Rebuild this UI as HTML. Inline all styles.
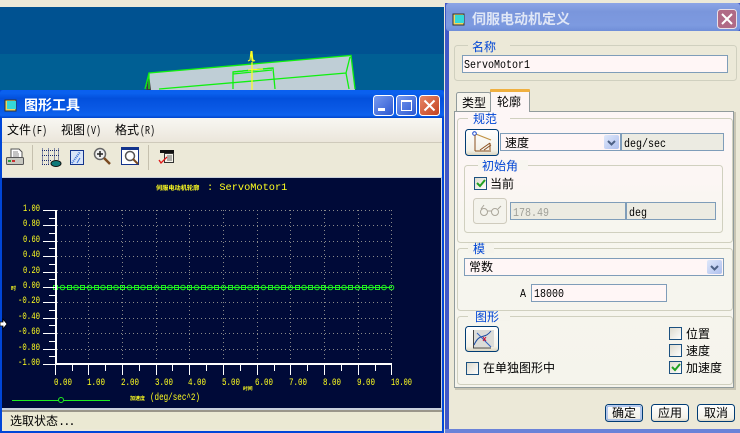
<!DOCTYPE html>
<html><head><meta charset="utf-8"><style>
html,body{margin:0;padding:0;background:#ece9d8;overflow:hidden}
svg{display:block}
text{font-family:"Liberation Sans","WenQuanYi Zen Hei","Noto Sans CJK SC",sans-serif;font-size:12px;fill:#000}
.m{font-family:"Liberation Mono","WenQuanYi Zen Hei",monospace;font-size:11.5px}
.b{fill:#0046d5}
.y{font-family:"Liberation Mono",monospace;font-size:10px;fill:#ffff20}
.c{shape-rendering:crispEdges}
</style></head><body>
<svg width="740" height="433" viewBox="0 0 740 433" xmlns="http://www.w3.org/2000/svg">
<defs>
<linearGradient id="tb" x1="0" y1="0" x2="0" y2="1"><stop offset="0" stop-color="#0a5ff0"/><stop offset=".12" stop-color="#0a60ee"/><stop offset=".3" stop-color="#0350dc"/><stop offset=".7" stop-color="#0a5ae6"/><stop offset=".9" stop-color="#0d62ee"/><stop offset="1" stop-color="#0044cc"/></linearGradient>
<linearGradient id="tb2" x1="0" y1="0" x2="0" y2="1"><stop offset="0" stop-color="#8ca5e6"/><stop offset=".3" stop-color="#7a96dc"/><stop offset=".8" stop-color="#7d9ae0"/><stop offset="1" stop-color="#6f8ed8"/></linearGradient>
<linearGradient id="btn" x1="0" y1="0" x2="0" y2="1"><stop offset="0" stop-color="#fff"/><stop offset=".8" stop-color="#f3f1e8"/><stop offset="1" stop-color="#d8d2bd"/></linearGradient>
<linearGradient id="bl" x1="0" y1="0" x2="1" y2="1"><stop offset="0" stop-color="#7a9cf0"/><stop offset="1" stop-color="#2a56d0"/></linearGradient>
<linearGradient id="rd" x1="0" y1="0" x2="1" y2="1"><stop offset="0" stop-color="#e8886a"/><stop offset="1" stop-color="#c2401c"/></linearGradient>
<linearGradient id="cb" x1="0" y1="0" x2="1" y2="1"><stop offset="0" stop-color="#dcd9cc"/><stop offset="1" stop-color="#fff"/></linearGradient>
<linearGradient id="dd" x1="0" y1="0" x2="1" y2="1"><stop offset="0" stop-color="#dfe8fa"/><stop offset="1" stop-color="#aebfee"/></linearGradient>
<linearGradient id="mn" x1="0" y1="0" x2="0" y2="1"><stop offset="0" stop-color="#f8f7f2"/><stop offset="1" stop-color="#ebe6db"/></linearGradient>
<linearGradient id="pn" x1="0" y1="0" x2="0" y2="1"><stop offset="0" stop-color="#fdf6f6"/><stop offset=".25" stop-color="#fcf6f4"/><stop offset=".4" stop-color="#f7f6ef"/><stop offset="1" stop-color="#f5f4ec"/></linearGradient>
</defs>

<!-- background -->
<rect class="c" width="740" height="7" fill="#ece9d8"/>
<rect class="c" y="7" width="447" height="47" fill="#005291"/>
<rect class="c" y="54" width="447" height="37" fill="#005f94"/>

<!-- model -->
<polygon points="149,73 351,55.5 355,90 146,90" fill="#bfced6"/>
<polygon points="146,90 149,74 151,90" fill="#3c3c3c"/>
<g fill="none" stroke="#10f010" stroke-width="1.300">
<path d="M145,89 149,73 351,55.5 355,89"/>
<path d="M149,73V89"/>
<path d="M159,89 346,73 350,57"/>
<path d="M346,73 349,89"/>
<path d="M233,89V72L273,68 275,89"/>
<path d="M233,72 272,68M233,74 272,70"/>
</g>
<path d="M252,62V90" stroke="#ffff20" stroke-width="1.200"/>
<path d="M248,61 250,60 251,51 253,60 255,61M251,51 252,61M252,51 253,62M248,70 263,69" stroke="#ffff20" stroke-width="1" fill="none"/>

<!-- graph window -->
<rect class="c" y="90" width="444" height="343" fill="#0046d8"/>
<rect x="0" y="90" width="444" height="28" rx="3" fill="url(#tb)"/>
<rect class="c" x="2" y="118" width="440" height="313" fill="#ece9d8"/>
<rect class="c" x="2" y="118" width="440" height="24" fill="url(#mn)"/>
<rect class="c" x="2" y="142" width="440" height="1" fill="#cfcabb"/>

<!-- title icon -->
<rect class="c" x="5" y="100" width="11" height="11" fill="#f0d860" stroke="#333"/>
<rect class="c" x="7" y="101" width="9" height="8" fill="#35d8d8"/>
<text x="24" y="110" style="font-size:14px;font-weight:bold;fill:#fff">图形工具</text>

<!-- caption buttons -->
<rect x="373.500" y="95.500" width="20" height="20" rx="3" fill="url(#bl)" stroke="#fff"/>
<rect class="c" x="378" y="108" width="7" height="3" fill="#fff"/>
<rect x="396.500" y="95.500" width="20" height="20" rx="3" fill="url(#bl)" stroke="#fff"/>
<path class="c" d="M401.500,101.500h10v9h-10z" fill="none" stroke="#fff"/><rect class="c" x="401" y="100" width="11" height="2" fill="#fff"/>
<rect x="419.500" y="95.500" width="20" height="20" rx="3" fill="url(#rd)" stroke="#fff"/>
<path d="M424.500,100.500 434.500,110.500M434.500,100.500 424.500,110.500" stroke="#fff" stroke-width="2"/>

<!-- menu -->
<text x="7" y="134">文件</text><text x="32" y="134" class="m" textLength="15" lengthAdjust="spacingAndGlyphs">(F)</text>
<text x="61" y="134">视图</text><text x="86" y="134" class="m" textLength="15" lengthAdjust="spacingAndGlyphs">(V)</text>
<text x="115" y="134">格式</text><text x="140" y="134" class="m" textLength="15" lengthAdjust="spacingAndGlyphs">(R)</text>

<!-- toolbar -->
<rect class="c" x="32" y="145" width="1" height="25" fill="#c5c0ae"/>
<rect class="c" x="148" y="145" width="1" height="25" fill="#c5c0ae"/>
<!-- printer -->
<path d="M11,149h8l3,3v6H11z" fill="#fff" stroke="#555"/>
<path d="M13,152h5M13,154h6M13,156h6" stroke="#888"/>
<rect x="6.500" y="157.500" width="17" height="7" rx="1" fill="#c8c8c0" stroke="#555"/>
<rect class="c" x="8" y="160" width="3" height="2" fill="#2a9a3a"/><rect class="c" x="12" y="160" width="3" height="2" fill="#c83030"/>
<!-- grid-eye -->
<path d="M42.500,148.500V165M48.500,148.500V165M54.500,148.500V160M58.500,148.500V160M42,150.500H59M42,155.500H59M42,160.500H52M42,164.500H50" stroke="#1a2a70" stroke-dasharray="1 1" fill="none"/>
<ellipse cx="56" cy="163.500" rx="5" ry="3" fill="#0e7a7a" stroke="#111"/>
<!-- sheet icon -->
<rect class="c" x="70.500" y="150.500" width="13" height="14" fill="#d8e4f8" stroke="#12338c"/>
<path d="M72,163 80,152" stroke="#3a70d8" stroke-width="2" stroke-dasharray="1 1"/>
<path d="M77,163 80,158" stroke="#3a70d8"/>
<!-- zoom plus -->
<circle cx="100" cy="154" r="5.500" fill="#f0f0f0" stroke="#666" stroke-width="1.500"/>
<path d="M97,154h6M100,151v6" stroke="#222" stroke-width="1.500"/>
<path d="M104,158 110,164" stroke="#7a4a20" stroke-width="2.500"/>
<!-- zoom window -->
<rect class="c" x="121.500" y="147.500" width="17" height="17" fill="#fff" stroke="#12338c"/>
<rect class="c" x="121" y="147" width="18" height="3" fill="#12338c"/>
<circle cx="130" cy="156" r="4.500" fill="none" stroke="#555" stroke-width="1.500"/>
<path d="M133,159 138,164" stroke="#7a4a20" stroke-width="2"/>
<!-- check doc -->
<rect class="c" x="160" y="150" width="14" height="3" fill="#111"/>
<rect class="c" x="164.500" y="153.500" width="9" height="9" fill="#f4f2e8" stroke="#333"/>
<path d="M167,156h5M167,158h5M167,160h5" stroke="#666"/>
<path d="M159,160 161,163 167,157" stroke="#e01818" stroke-width="1.300" fill="none"/>

<!-- plot area -->
<rect class="c" x="2" y="177" width="440" height="233" fill="#c8d0dc"/>
<rect class="c" x="2" y="178" width="439" height="230" fill="#000a38"/>
<g stroke="#8a8a8a" stroke-dasharray="1 3" fill="none">
<path class="c" d="M57,210.500H391M57,225.500H391M57,241.500H391M57,256.500H391M57,272.500H391M57,302.500H391M57,318.500H391M57,333.500H391M57,349.500H391"/>
<path class="c" d="M88.500,210V362M122.500,210V362M156.500,210V362M189.500,210V362M223.500,210V362M257.500,210V362M290.500,210V362M324.500,210V362M358.500,210V362M391.500,210V362"/>
</g>
<path class="c" d="M54,287.500H392" stroke="#20ee20"/>
<path class="c" fill="none" stroke="#20ee20" d="M53.500,285.500h4v4h-4zM67.500,285.500h4v4h-4zM80.500,285.500h4v4h-4zM94.500,285.500h4v4h-4zM107.500,285.500h4v4h-4zM120.500,285.500h4v4h-4zM134.500,285.500h4v4h-4zM147.500,285.500h4v4h-4zM161.500,285.500h4v4h-4zM174.500,285.500h4v4h-4zM187.500,285.500h4v4h-4zM201.500,285.500h4v4h-4zM214.500,285.500h4v4h-4zM228.500,285.500h4v4h-4zM241.500,285.500h4v4h-4zM254.500,285.500h4v4h-4zM268.500,285.500h4v4h-4zM281.500,285.500h4v4h-4zM295.500,285.500h4v4h-4zM308.500,285.500h4v4h-4zM321.500,285.500h4v4h-4zM335.500,285.500h4v4h-4zM348.500,285.500h4v4h-4zM362.500,285.500h4v4h-4zM375.500,285.500h4v4h-4z"/>
<g fill="none" stroke="#20ee20">
<circle cx="62.500" cy="287.500" r="2.300"/><circle cx="76" cy="287.500" r="2.300"/><circle cx="89.500" cy="287.500" r="2.300"/><circle cx="103" cy="287.500" r="2.300"/><circle cx="116" cy="287.500" r="2.300"/><circle cx="129.500" cy="287.500" r="2.300"/><circle cx="143" cy="287.500" r="2.300"/><circle cx="156.500" cy="287.500" r="2.300"/><circle cx="170" cy="287.500" r="2.300"/><circle cx="183" cy="287.500" r="2.300"/><circle cx="196.500" cy="287.500" r="2.300"/><circle cx="210" cy="287.500" r="2.300"/><circle cx="223.500" cy="287.500" r="2.300"/><circle cx="237" cy="287.500" r="2.300"/><circle cx="250" cy="287.500" r="2.300"/><circle cx="263.500" cy="287.500" r="2.300"/><circle cx="277" cy="287.500" r="2.300"/><circle cx="290.500" cy="287.500" r="2.300"/><circle cx="304" cy="287.500" r="2.300"/><circle cx="317" cy="287.500" r="2.300"/><circle cx="330.500" cy="287.500" r="2.300"/><circle cx="344" cy="287.500" r="2.300"/><circle cx="357.500" cy="287.500" r="2.300"/><circle cx="371" cy="287.500" r="2.300"/><circle cx="384" cy="287.500" r="2.300"/><circle cx="391.500" cy="287.500" r="2.300"/>
</g>
<rect class="c" x="55" y="210" width="2" height="155" fill="#fff"/>
<rect class="c" x="55" y="363" width="337" height="2" fill="#fff"/>
<path class="c" stroke="#fff" fill="none" d="M43,210.500H55M43,225.500H55M43,241.500H55M43,256.500H55M43,272.500H55M43,287.500H55M43,302.500H55M43,318.500H55M43,333.500H55M43,349.500H55M43,364.500H55
M49,218.500H55M49,233.500H55M49,248.500H55M49,264.500H55M49,279.500H55M49,295.500H55M49,310.500H55M49,325.500H55M49,341.500H55M49,356.500H55
M55.500,365V375M88.500,365V375M122.500,365V375M156.500,365V375M189.500,365V375M223.500,365V375M257.500,365V375M290.500,365V375M324.500,365V375M358.500,365V375M391.500,365V375
M72.500,365V371M105.500,365V371M139.500,365V371M172.500,365V371M206.500,365V371M240.500,365V371M274.500,365V371M307.500,365V371M341.500,365V371M375.500,365V371"/>
<text class="y" x="23" y="211" textLength="17" lengthAdjust="spacingAndGlyphs">1.00</text>
<text class="y" x="23" y="226" textLength="17" lengthAdjust="spacingAndGlyphs">0.80</text>
<text class="y" x="23" y="242" textLength="17" lengthAdjust="spacingAndGlyphs">0.60</text>
<text class="y" x="23" y="257" textLength="17" lengthAdjust="spacingAndGlyphs">0.40</text>
<text class="y" x="23" y="273" textLength="17" lengthAdjust="spacingAndGlyphs">0.20</text>
<text class="y" x="23" y="288" textLength="17" lengthAdjust="spacingAndGlyphs">0.00</text>
<text class="y" x="18" y="303" textLength="22" lengthAdjust="spacingAndGlyphs">-0.20</text>
<text class="y" x="18" y="319" textLength="22" lengthAdjust="spacingAndGlyphs">-0.40</text>
<text class="y" x="18" y="334" textLength="22" lengthAdjust="spacingAndGlyphs">-0.60</text>
<text class="y" x="18" y="350" textLength="22" lengthAdjust="spacingAndGlyphs">-0.80</text>
<text class="y" x="18" y="365" textLength="22" lengthAdjust="spacingAndGlyphs">-1.00</text>
<text class="y" x="54" y="385" textLength="18" lengthAdjust="spacingAndGlyphs">0.00</text>
<text class="y" x="87" y="385" textLength="18" lengthAdjust="spacingAndGlyphs">1.00</text>
<text class="y" x="121" y="385" textLength="18" lengthAdjust="spacingAndGlyphs">2.00</text>
<text class="y" x="155" y="385" textLength="18" lengthAdjust="spacingAndGlyphs">3.00</text>
<text class="y" x="188" y="385" textLength="18" lengthAdjust="spacingAndGlyphs">4.00</text>
<text class="y" x="222" y="385" textLength="18" lengthAdjust="spacingAndGlyphs">5.00</text>
<text class="y" x="255" y="385" textLength="18" lengthAdjust="spacingAndGlyphs">6.00</text>
<text class="y" x="289" y="385" textLength="18" lengthAdjust="spacingAndGlyphs">7.00</text>
<text class="y" x="323" y="385" textLength="18" lengthAdjust="spacingAndGlyphs">8.00</text>
<text class="y" x="357" y="385" textLength="18" lengthAdjust="spacingAndGlyphs">9.00</text>
<text class="y" x="391" y="385" textLength="21" lengthAdjust="spacingAndGlyphs">10.00</text>
<text x="156" y="190" style="font-size:6.200px;font-weight:bold;fill:#ffff20">伺服电动机轮廓</text>
<text class="y" x="207" y="190" style="font-size:10.300px">: ServoMotor1</text>
<text x="11" y="290" style="font-size:5px;font-weight:bold;fill:#ffff20">时</text>
<text x="243" y="390" style="font-size:4.800px;font-weight:bold;fill:#ffff20">时间</text>
<text x="130" y="400" style="font-size:5px;font-weight:bold;fill:#ffff20">加速度</text>
<text class="y" x="150" y="400" textLength="50" lengthAdjust="spacingAndGlyphs">(deg/sec^2)</text>
<path class="c" d="M12,400.500H110" stroke="#20ee20"/>
<circle cx="61" cy="400" r="2.500" fill="#000a38" stroke="#20ee20"/>

<!-- arrow cursor -->
<path d="M0,322h3v-3l4,5-4,5v-3H0z" fill="#fff" stroke="#000" stroke-width=".8"/>

<!-- status -->
<rect class="c" x="2" y="410" width="440" height="2" fill="#9a968a"/>
<rect class="c" x="4" y="412" width="426" height="17" fill="#ebe9d3"/>
<text x="10" y="425">选取状态</text><text x="58" y="425" class="m" style="font-size:12px;letter-spacing:-2px">...</text>

<!-- dialog -->
<rect class="c" x="444" y="0" width="296" height="433" fill="#ece9d8"/>
<rect class="c" x="445" y="3" width="295" height="430" fill="#4058c8"/>
<rect class="c" x="449" y="31" width="291" height="398" fill="#ece9d8"/>
<rect x="446" y="3" width="294" height="28" rx="3" fill="url(#tb2)"/>
<rect class="c" x="453" y="14" width="11" height="11" fill="#f0d860" stroke="#333"/>
<rect class="c" x="455" y="15" width="9" height="8" fill="#35d8d8"/>
<text x="472" y="24" style="font-size:14px;font-weight:bold;fill:#dfe6f6">伺服电动机定义</text>
<rect x="717.500" y="9.500" width="19" height="19" rx="3" fill="#b06a86" stroke="#e8e0e8"/>
<path d="M722,14 732,24M732,14 722,24" stroke="#fff" stroke-width="2"/>

<!-- name group -->
<rect x="454.500" y="45.500" width="282" height="35" rx="3" fill="none" stroke="#d0d0bf"/>
<rect class="c" x="468" y="40" width="42" height="10" fill="#ece9d8"/>
<text x="472" y="51" class="b">名称</text>
<rect class="c" x="462.500" y="55.500" width="265" height="17" fill="#fff6f6" stroke="#7f9db9"/>
<text x="464" y="68" class="m" textLength="66" lengthAdjust="spacingAndGlyphs">ServoMotor1</text>

<!-- tabs -->
<rect x="456.500" y="92.500" width="34" height="20" rx="2" fill="#f6f4ec" stroke="#919b9c"/>
<text x="462" y="107">类型</text>
<rect class="c" x="454.500" y="111.500" width="279" height="276" fill="url(#pn)" stroke="#919b9c"/>
<rect class="c" x="734" y="112" width="2" height="277" fill="#c8c5b4"/>
<rect class="c" x="455" y="388" width="281" height="2" fill="#c8c5b4"/>
<path class="c" d="M490.500,111.500V90.500H529.500V111.500" fill="#fdf6f6" stroke="#919b9c"/>
<rect class="c" x="491" y="111" width="38" height="1" fill="#fdf6f6"/>
<rect x="490" y="89" width="40" height="3" rx="1" fill="#f0b040"/>
<text x="497" y="106">轮廓</text>

<!-- spec group -->
<rect x="457.500" y="118.500" width="275" height="124" rx="3" fill="none" stroke="#d0d0bf"/>
<rect class="c" x="468" y="113" width="42" height="10" fill="#fdf6f6"/>
<text x="473" y="123" class="b">规范</text>
<rect x="465.500" y="129.500" width="33" height="26" rx="3" fill="url(#btn)" stroke="#003c74"/>
<path d="M474.500,133.500 491,140" stroke="#c09040" stroke-width="1.200"/>
<circle cx="474.500" cy="133.500" r="1.800" fill="#fff" stroke="#1848d0"/>
<path d="M475,135V151M475,151H491" stroke="#8a5020" fill="none"/>
<path d="M480,150 490,143M484,150 491,145M490,143V150" stroke="#8a5020" fill="none"/>
<rect class="c" x="500.500" y="133.500" width="120" height="17" fill="#fff6f6" stroke="#7f9db9"/>
<text x="505" y="147">速度</text>
<rect x="604" y="135" width="15" height="14" rx="2" fill="url(#dd)"/>
<path d="M608,141 611.500,144.500 615,141" fill="none" stroke="#4d6185" stroke-width="2"/>
<rect class="c" x="621.500" y="133.500" width="102" height="17" fill="#ecebe2" stroke="#7f9db9"/>
<text x="624" y="147" class="m" textLength="42" lengthAdjust="spacingAndGlyphs">deg/sec</text>

<!-- initial angle -->
<rect x="464.500" y="165.500" width="258" height="67" rx="3" fill="none" stroke="#d0d0bf"/>
<rect class="c" x="478" y="160" width="50" height="10" fill="#f8f6f0"/>
<text x="482" y="170" class="b">初始角</text>
<rect class="c" x="474.500" y="177.500" width="12" height="12" fill="url(#cb)" stroke="#1c5180"/>
<path d="M477,183 480,186 485,180" fill="none" stroke="#21a121" stroke-width="2"/>
<text x="490" y="188">当前</text>
<rect x="473.500" y="198.500" width="33" height="25" rx="3" fill="#f4f3ec" stroke="#cfcbbd"/>
<circle cx="484" cy="212" r="3.500" fill="none" stroke="#aaa69a"/><circle cx="495" cy="212" r="3.500" fill="none" stroke="#aaa69a"/>
<path d="M487.500,211 491.500,211M481,209 484,205M498,209 501,206" stroke="#aaa69a" fill="none"/>
<rect class="c" x="510.500" y="202.500" width="115" height="17" fill="#ecebe2" stroke="#7f9db9"/>
<text x="513" y="216" class="m" style="fill:#a0a098" textLength="36" lengthAdjust="spacingAndGlyphs">178.49</text>
<rect class="c" x="626.500" y="202.500" width="89" height="17" fill="#ecebe2" stroke="#7f9db9"/>
<text x="629" y="216" class="m" textLength="18" lengthAdjust="spacingAndGlyphs">deg</text>

<!-- mode group -->
<rect x="457.500" y="248.500" width="275" height="62" rx="3" fill="none" stroke="#d0d0bf"/>
<rect class="c" x="468" y="243" width="26" height="10" fill="#f5f4ec"/>
<text x="473" y="253" class="b">模</text>
<rect class="c" x="464.500" y="258.500" width="259" height="17" fill="#fff6f6" stroke="#7f9db9"/>
<text x="469" y="271">常数</text>
<rect x="707" y="260" width="15" height="14" rx="2" fill="url(#dd)"/>
<path d="M711,266 714.500,269.500 718,266" fill="none" stroke="#4d6185" stroke-width="2"/>
<text x="520" y="297" class="m" textLength="6" lengthAdjust="spacingAndGlyphs">A</text>
<rect class="c" x="531.500" y="284.500" width="135" height="17" fill="#fff6f6" stroke="#7f9db9"/>
<text x="534" y="297" class="m" textLength="30" lengthAdjust="spacingAndGlyphs">18000</text>

<!-- graph group -->
<rect x="457.500" y="316.500" width="275" height="68" rx="3" fill="none" stroke="#d0d0bf"/>
<rect class="c" x="468" y="311" width="42" height="10" fill="#f5f4ec"/>
<text x="475" y="321" class="b">图形</text>
<rect x="465.500" y="326.500" width="33" height="25" rx="3" fill="url(#btn)" stroke="#003c74"/>
<rect class="c" x="474" y="330" width="20" height="17" fill="#dcdcd8"/>
<path d="M473.500,330V348H491" stroke="#444" fill="none"/>
<path d="M474,345C480,332 484,340 491,331" stroke="#1c4ca0" fill="none"/>
<path d="M477,333 491,347" stroke="#3060c0" fill="none"/>
<path d="M483,341 486,337M483,337 486,341" stroke="#d01030"/>
<rect class="c" x="466.500" y="362.500" width="12" height="12" fill="url(#cb)" stroke="#1c5180"/>
<text x="483" y="372">在单独图形中</text>
<rect class="c" x="669.500" y="327.500" width="12" height="12" fill="url(#cb)" stroke="#1c5180"/>
<text x="686" y="338">位置</text>
<rect class="c" x="669.500" y="344.500" width="12" height="12" fill="url(#cb)" stroke="#1c5180"/>
<text x="686" y="355">速度</text>
<rect class="c" x="669.500" y="361.500" width="12" height="12" fill="url(#cb)" stroke="#1c5180"/>
<path d="M672,367 675,370 680,364" fill="none" stroke="#21a121" stroke-width="2"/>
<text x="686" y="372">加速度</text>

<!-- buttons -->
<rect x="605.500" y="404.500" width="37" height="17" rx="3" fill="url(#btn)" stroke="#003c74"/>
<rect x="607" y="406" width="34" height="14" rx="2" fill="none" stroke="#9db8ea" stroke-width="1.500"/>
<text x="612" y="417">确定</text>
<rect x="651.500" y="404.500" width="37" height="17" rx="3" fill="url(#btn)" stroke="#003c74"/>
<text x="658" y="417">应用</text>
<rect x="697.500" y="404.500" width="37" height="17" rx="3" fill="url(#btn)" stroke="#003c74"/>
<text x="704" y="417">取消</text>
<rect class="c" x="445" y="429" width="295" height="4" fill="#6a82d8"/>
</svg>
</body></html>
